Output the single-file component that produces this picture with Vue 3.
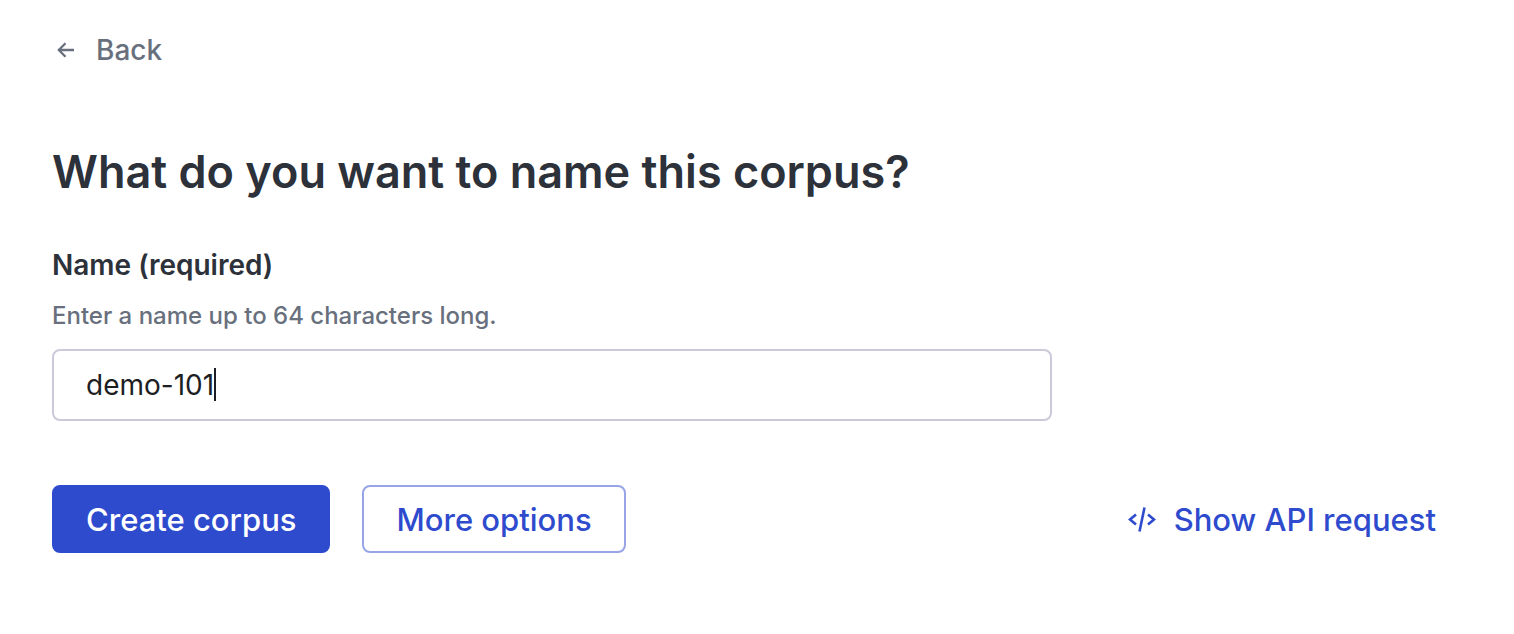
<template>
  <main class="page">
    <a href="#" class="back" @click.prevent>
      <svg class="back-icon" viewBox="0 0 18 18" fill="none" stroke="currentColor" stroke-width="2.300">
        <path d="M17 9H2.500M8.500 2.200L1.800 9l6.700 6.800" />
      </svg>
      Back
    </a>

    <h1 class="title">What do you want to name this corpus?</h1>

    <form class="form" @submit.prevent>
      <label class="label" for="corpus-name">Name (required)</label>
      <p id="corpus-name-hint" class="hint">Enter a name up to {{ maxLength }} characters long.</p>
      <div class="field">
        <input
          id="corpus-name"
          v-model="name"
          class="input"
          type="text"
          autocomplete="off"
          spellcheck="false"
          :maxlength="maxLength"
          aria-describedby="corpus-name-hint"
        />
        <span class="caret" aria-hidden="true">{{ name }}</span>
      </div>

      <div class="actions">
        <button type="submit" class="button primary">Create corpus</button>
        <button type="button" class="button secondary">More options</button>
        <button type="button" class="button link">
          <svg class="code-icon" viewBox="0 0 28 26" fill="none" stroke="currentColor" stroke-width="2.600">
            <path d="M8 7.500L2 12.500l6 5M20 7.500l6 5-6 5M16.500 0.500L11.500 24.500" />
          </svg>
          Show API request
        </button>
      </div>
    </form>
  </main>
</template>

<script setup>
import { ref } from 'vue'

const maxLength = 64
const name = ref('demo-101')
</script>

<style>
body {
  background: #fff;
}
</style>

<style scoped>
.page {
  padding: 32px 44px 80px 52px;
  font-family: Inter, "Open Sans", sans-serif;
  color: #2c313a;
}

.back {
  display: inline-flex;
  align-items: center;
  gap: 21px;
  padding-left: 5px;
  font-size: 28px;
  line-height: 36px;
  font-weight: 500;
  color: #69707d;
  text-decoration: none;
}

.back-icon {
  width: 18px;
  height: 18px;
}

.title {
  margin: 72px 0 0;
  font-size: 45px;
  line-height: 64px;
  font-weight: 600;
}

.form {
  margin-top: 43px;
}

.label {
  display: block;
  font-size: 28px;
  line-height: 36px;
  font-weight: 600;
}

.hint {
  margin: 17px 0;
  font-size: 24px;
  line-height: 32px;
  font-weight: 500;
  color: #69707d;
}

.field {
  position: relative;
  max-width: 1000px;
}

.input {
  display: block;
  box-sizing: border-box;
  width: 100%;
  height: 72px;
  padding: 0 32px;
  border: 2px solid #cacadb;
  border-radius: 8px;
  outline: none;
  background: #fff;
  font: inherit;
  font-size: 28px;
  color: #1d1e24;
  caret-color: transparent;
}

/* stands in for the native caret, always after the last character */
.caret {
  position: absolute;
  top: 19px;
  left: 34px;
  height: 33px;
  border-right: 2px solid #1d1e24;
  font-size: 28px;
  line-height: 33px;
  color: transparent;
  white-space: pre;
  pointer-events: none;
}

.actions {
  display: flex;
  align-items: center;
  gap: 32px;
  margin-top: 64px;
}

.button {
  padding: 13px 32px 11px;
  border: 2px solid transparent;
  border-radius: 8px;
  background: none;
  font: inherit;
  font-size: 31px;
  line-height: 40px;
  font-weight: 500;
  color: #2e4bce;
  cursor: pointer;
}

.primary {
  border-color: #2e4bce;
  background: #2e4bce;
  color: #fff;
}

.secondary {
  border-color: #97a5e7;
}

.link {
  display: flex;
  align-items: center;
  gap: 18px;
  margin-left: auto;
}

.code-icon {
  width: 28px;
  height: 26px;
}
</style>
